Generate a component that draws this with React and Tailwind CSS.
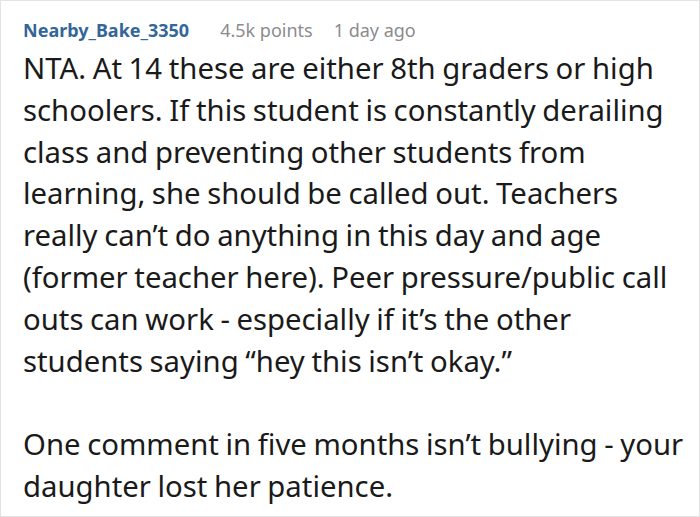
import React from "react";

function Comment({ author, points, time, paragraphs }) {
  return (
    <div className="w-[700px] h-[517px] bg-white border border-[#e3e3e3] overflow-hidden font-['Noto_Sans',sans-serif]">
      <div className="pl-[22px] pt-[17px]">
        {/* meta row */}
        <div className="flex items-baseline gap-[31px] text-[18px] leading-[24px]">
          <span className="font-bold text-[#336699]">{author}</span>
          <div className="flex gap-[21px] text-[#8c8c8c]">
            <span>{points}</span>
            <span>{time}</span>
          </div>
        </div>

        {/* body */}
        <div className="mt-[6px] pr-[8px] text-[29.3px] leading-[41.8px] text-[#1a1a1a] [word-spacing:-1px]">
          {paragraphs.map((p, i) => (
            <p key={i} className={i > 0 ? "mt-[41.8px]" : ""}>
              {p}
            </p>
          ))}
        </div>
      </div>
    </div>
  );
}

export default function App() {
  return (
    <Comment
      author="Nearby_Bake_3350"
      points="4.5k points"
      time="1 day ago"
      paragraphs={[
        "NTA. At 14 these are either 8th graders or high schoolers. If this student is constantly derailing class and preventing other students from learning, she should be called out. Teachers really can\u2019t do anything in this day and age (former teacher here). Peer pressure/public call outs can work - especially if it\u2019s the other students saying \u201chey this isn\u2019t okay.\u201d",
        "One comment in five months isn\u2019t bullying - your daughter lost her patience.",
      ]}
    />
  );
}
